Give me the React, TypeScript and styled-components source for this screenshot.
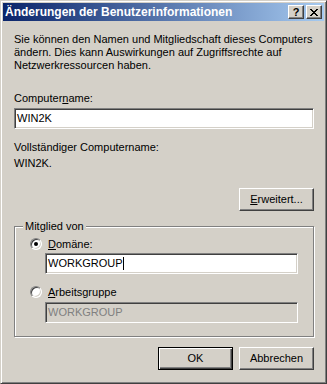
import React from "react";
import styled, { createGlobalStyle } from "styled-components";

const Global = createGlobalStyle`
  html, body { margin: 0; padding: 0; background: #D4D0C8; }
  body { font-family: "Liberation Sans", Arial, sans-serif; font-size: 11px; }
  * { box-sizing: border-box; }
`;

const Window = styled.div`
  width: 327px;
  height: 384px;
  background: #D4D0C8;
  border: 1px solid;
  border-color: #D4D0C8 #404040 #404040 #D4D0C8;
  box-shadow: inset 1px 1px 0 #FFFFFF, inset -1px -1px 0 #808080;
  padding: 2px;
  display: flex;
  flex-direction: column;
  color: #000;
`;

const TitleBar = styled.div`
  height: 18px;
  flex: none;
  background: linear-gradient(to right, #0A246A, #A6CAF0);
  display: flex;
  align-items: center;
  padding: 0 2px 0 2px;
`;

const Title = styled.div`
  flex: 1;
  color: #fff;
  font-weight: bold;
  font-size: 12px;
  line-height: 14px;
  white-space: nowrap;
`;

const CaptionButton = styled.div<{ $gap?: number }>`
  width: 16px;
  height: 14px;
  background: #D4D0C8;
  border: 1px solid;
  border-color: #FFFFFF #404040 #404040 #FFFFFF;
  box-shadow: inset -1px -1px 0 #808080;
  margin-left: ${(p) => p.$gap ?? 0}px;
  display: flex;
  align-items: center;
  justify-content: center;
  font-weight: bold;
  font-size: 11px;
  line-height: 11px;
  color: #000;
`;

const Body = styled.div`
  flex: 1;
  padding: 12px 10px 0 11px;
  display: flex;
  flex-direction: column;
`;

const Text = styled.div<{ $mt?: number }>`
  line-height: 13px;
  margin-top: ${(p) => p.$mt ?? 0}px;
  white-space: nowrap;
`;

const Edit = styled.div<{ $mt?: number; $ml?: number; $w?: string; $disabled?: boolean }>`
  height: 21px;
  width: ${(p) => p.$w ?? "100%"};
  margin-top: ${(p) => p.$mt ?? 0}px;
  margin-left: ${(p) => p.$ml ?? 0}px;
  background: ${(p) => (p.$disabled ? "#D4D0C8" : "#FFFFFF")};
  color: ${(p) => (p.$disabled ? "#808080" : "#000")};
  border: 1px solid;
  border-color: #808080 #FFFFFF #FFFFFF #808080;
  box-shadow: inset 1px 1px 0 #404040, inset -1px -1px 0 #D4D0C8;
  padding: 0 2px;
  display: flex;
  align-items: center;
  line-height: 13px;
`;

const Caret = styled.span`
  display: inline-block;
  width: 1px;
  height: 13px;
  background: #000;
  vertical-align: middle;
`;

const ButtonRow = styled.div<{ $mt: number }>`
  display: flex;
  justify-content: flex-end;
  gap: 6px;
  margin-top: ${(p) => p.$mt}px;
`;

const Button = styled.div<{ $default?: boolean }>`
  width: 75px;
  height: 23px;
  display: flex;
  align-items: center;
  justify-content: center;
  background: #D4D0C8;
  border: 1px solid;
  border-color: ${(p) => (p.$default ? "#000" : "#FFFFFF #404040 #404040 #FFFFFF")};
  box-shadow: ${(p) =>
    p.$default
      ? "inset 1px 1px 0 #FFFFFF, inset -1px -1px 0 #404040, inset -2px -2px 0 #808080"
      : "inset -1px -1px 0 #808080"};
  line-height: 13px;
`;

const Group = styled.div`
  position: relative;
  margin-top: 15px;
  width: 300px;
  height: 111px;
  border: 1px solid #808080;
  box-shadow: inset 1px 1px 0 #FFFFFF, 1px 1px 0 #FFFFFF;
  padding: 10px 0 0 15px;
  display: flex;
  flex-direction: column;
`;

const Legend = styled.div`
  position: absolute;
  top: -7px;
  left: 8px;
  padding: 0 2px;
  background: #D4D0C8;
  line-height: 13px;
`;

const RadioRow = styled.div<{ $mt?: number }>`
  display: flex;
  align-items: center;
  height: 13px;
  margin-top: ${(p) => p.$mt ?? 0}px;
`;

const Radio = styled.span<{ $checked?: boolean }>`
  position: relative;
  width: 12px;
  height: 12px;
  border-radius: 50%;
  background: #fff;
  border: 1px solid;
  border-color: #808080 #FFFFFF #FFFFFF #808080;
  box-shadow: inset 1px 1px 0 #404040, inset -1px -1px 0 #D4D0C8;
  margin-right: 6px;
  flex: none;
  &::after {
    content: "";
    display: ${(p) => (p.$checked ? "block" : "none")};
    position: absolute;
    left: 3px;
    top: 3px;
    width: 4px;
    height: 4px;
    border-radius: 50%;
    background: #000;
  }
`;

const U = styled.span`
  text-decoration: underline;
`;

const CloseIcon = () => (
  <svg width="8" height="7" viewBox="0 0 8 7" shapeRendering="crispEdges">
    <path
      d="M0 0h2v1h-2z M6 0h2v1h-2z M1 1h2v1h-2z M5 1h2v1h-2z M2 2h4v1h-4z M3 3h2v1h-2z M2 4h4v1h-4z M1 5h2v1h-2z M5 5h2v1h-2z M0 6h2v1h-2z M6 6h2v1h-2z"
      fill="#000"
    />
  </svg>
);

export default function App() {
  return (
    <>
      <Global />
      <Window>
        <TitleBar>
          <Title>Änderungen der Benutzerinformationen</Title>
          <CaptionButton>?</CaptionButton>
          <CaptionButton $gap={2}>
            <CloseIcon />
          </CaptionButton>
        </TitleBar>
        <Body>
          <Text>
            Sie können den Namen und Mitgliedschaft dieses Computers
            <br />
            ändern. Dies kann Auswirkungen auf Zugriffsrechte auf
            <br />
            Netzwerkressourcen haben.
          </Text>
          <Text $mt={20}>
            Computer<U>n</U>ame:
          </Text>
          <Edit $mt={3}>WIN2K</Edit>
          <Text $mt={12}>Vollständiger Computername:</Text>
          <Text $mt={3}>WIN2K.</Text>
          <ButtonRow $mt={18}>
            <Button>
              <span>
                <U>E</U>rweitert...
              </span>
            </Button>
          </ButtonRow>
          <Group>
            <Legend>Mitglied von</Legend>
            <RadioRow>
              <Radio $checked />
              <span>
                <U>D</U>omäne:
              </span>
            </RadioRow>
            <Edit $mt={3} $ml={15} $w="253px">
              <span>WORKGROUP</span>
              <Caret />
            </Edit>
            <RadioRow $mt={11}>
              <Radio />
              <span>
                <U>A</U>rbeitsgruppe
              </span>
            </RadioRow>
            <Edit $mt={4} $ml={15} $w="253px" $disabled>
              WORKGROUP
            </Edit>
          </Group>
          <ButtonRow $mt={10}>
            <Button $default>OK</Button>
            <Button>Abbrechen</Button>
          </ButtonRow>
        </Body>
      </Window>
    </>
  );
}
